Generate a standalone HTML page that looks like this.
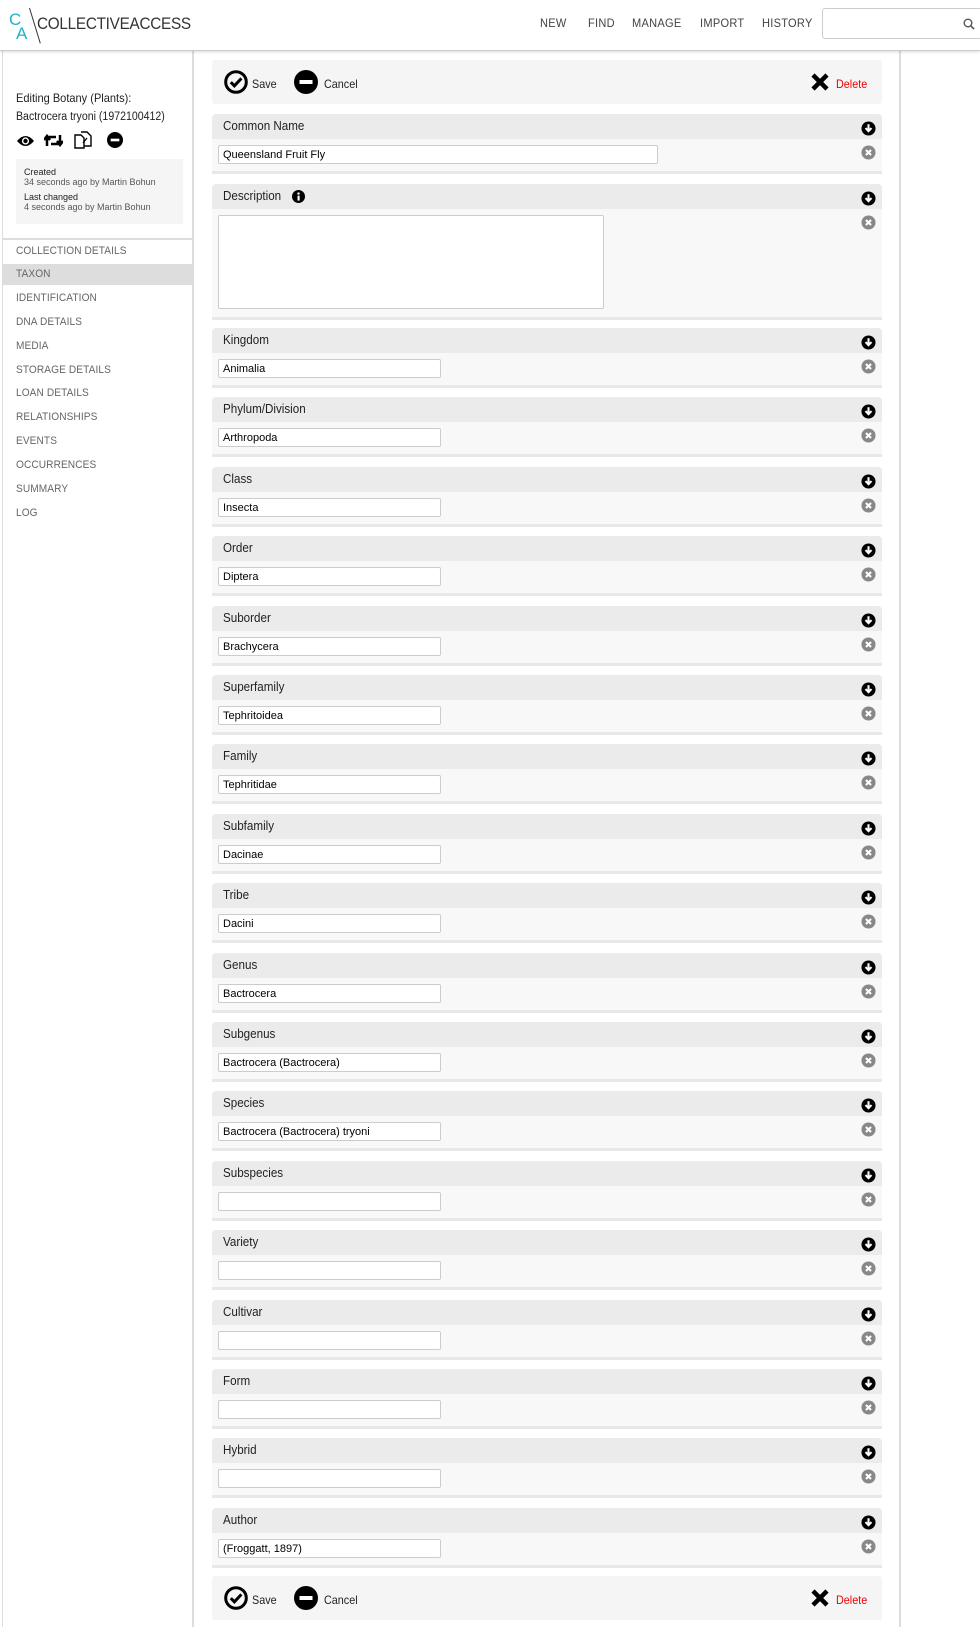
<!DOCTYPE html>
<html><head><meta charset="utf-8"><style>
*{box-sizing:border-box;margin:0;padding:0}
body{width:980px;height:1627px;background:#fff;font-family:"Liberation Sans",sans-serif;position:relative;overflow:hidden;color:#222}
.hdr{position:absolute;left:0;top:0;width:980px;height:51px;background:#fff;border-bottom:1px solid #ccc;box-shadow:0 1px 3px rgba(0,0,0,.15);z-index:2}
.logo{position:absolute;left:9px;top:8px;height:36px}
.logo .c{position:absolute;left:0;top:2px;font-size:17px;color:#22b0c8}
.logo .a{position:absolute;left:7px;top:16px;font-size:17px;color:#22b0c8}
.logo .sl{position:absolute;left:20px;top:0;width:1px;height:37px;background:#333;transform:rotate(-17deg);transform-origin:top}
.logo .t{position:absolute;left:28px;top:6px;font-size:17px;color:#333;letter-spacing:-.3px;transform:scaleX(.9);transform-origin:left;white-space:nowrap}
.nav{position:absolute;top:16px;font-size:12px;color:#444;letter-spacing:.3px;transform:scaleX(.92);transform-origin:left}
.search{position:absolute;left:822px;top:8px;width:160px;height:31px;border:1px solid #ccc;border-radius:3px}
.side{position:absolute;left:2px;top:51px;width:192px;height:1576px;border-right:2px solid #ddd;border-left:1px solid #ddd}
.side .ed{position:absolute;left:13px;top:40px;font-size:12px;color:#222;transform:scaleX(.92);transform-origin:left}
.side .bt{position:absolute;left:13px;top:60px;font-size:11.5px;color:#222;transform:scaleX(.92);transform-origin:left}
.info{position:absolute;left:13px;top:108px;width:167px;height:65px;background:#f5f5f5;font-size:9px;color:#555;padding:8px 0 0 8px;line-height:10px}
.info b{font-weight:normal;color:#222}
.sep{position:absolute;left:0;top:187px;width:190px;height:2px;background:#ddd}
.item{position:absolute;left:0;width:190px;height:21px;font-size:11px;color:#666;padding-left:13px;line-height:21px;letter-spacing:.1px}
.item span{display:inline-block;transform:scaleX(.92);transform-origin:left}
.main{position:absolute;left:194px;top:51px;width:707px;height:1576px;border-right:2px solid #ddd}
.tb{position:absolute;left:212px;width:670px;height:44px;background:#f5f5f5;border-radius:3px;font-size:12px}
.tb span{position:absolute;top:17px;transform:scaleX(.9);transform-origin:left}
.bundle{position:absolute;left:212px;width:670px;background:#f8f8f8;border-bottom:3px solid #e8e8e8;border-radius:4px 4px 0 0}
.bh{height:25px;background:#ebebeb;font-size:12.5px;padding:5px 0 0 11px;color:#222;position:relative;border-radius:4px 4px 0 0}
.bh span{display:inline-block;transform:scaleX(.93);transform-origin:left}
.bb{height:32px;position:relative}
.inp{position:absolute;left:6px;top:6px;width:223px;height:19px;background:#fff;border:1px solid #ccc;border-radius:2px;font-size:11px;padding:3px 0 0 4px;color:#000}
.dn{position:absolute;right:6px;top:7px}
.rm{position:absolute;right:6px;top:6px}
</style></head><body>
<svg width="0" height="0" style="position:absolute"><defs>
<symbol id="down" viewBox="0 0 16 16"><circle cx="8" cy="8" r="7.5" fill="#000"/><path d="M8 3.5v7M4.8 7.5L8 10.8l3.2-3.3" stroke="#fff" stroke-width="2.2" fill="none"/></symbol>
<symbol id="rm" viewBox="0 0 16 16"><circle cx="8" cy="8" r="7.5" fill="#888"/><path d="M5.3 5.3l5.4 5.4M10.7 5.3l-5.4 5.4" stroke="#fff" stroke-width="2.2"/></symbol>
<symbol id="save" viewBox="0 0 24 24"><circle cx="12" cy="12" r="10.3" fill="none" stroke="#000" stroke-width="3"/><path d="M6.8 12.2l3.6 3.6 7-7.4" stroke="#000" stroke-width="3" fill="none"/></symbol>
<symbol id="cancel" viewBox="0 0 24 24"><circle cx="12" cy="12" r="12" fill="#000"/><rect x="5.5" y="10" width="13" height="4" fill="#fff"/></symbol>
<symbol id="x" viewBox="0 0 20 20"><path d="M3 3l14 14M17 3L3 17" stroke="#000" stroke-width="4.5"/></symbol>
</defs></svg>
<div class="hdr">
 <div class="logo"><span class="c">C</span><span class="a">A</span><div class="sl"></div><span class="t">COLLECTIVEACCESS</span></div>
 <span class="nav" style="left:540px">NEW</span>
 <span class="nav" style="left:588px">FIND</span>
 <span class="nav" style="left:632px">MANAGE</span>
 <span class="nav" style="left:700px">IMPORT</span>
 <span class="nav" style="left:762px">HISTORY</span>
 <div class="search"><svg style="position:absolute;right:6px;top:9px" width="12" height="12" viewBox="0 0 12 12"><circle cx="5" cy="5" r="3.8" fill="none" stroke="#555" stroke-width="1.4"/><path d="M7.8 7.8l3.3 3.3" stroke="#555" stroke-width="1.6"/></svg></div>
</div>
<div class="side">
 <div class="ed">Editing Botany (Plants):</div>
 <div class="bt">Bactrocera tryoni (1972100412)</div>
 <svg style="position:absolute;left:13px;top:83px" width="19" height="14" viewBox="0 0 19 14"><path d="M1 7Q9.5-3 18 7Q9.5 17 1 7Z" fill="#000"/><circle cx="9.5" cy="7" r="3.6" fill="#fff"/><circle cx="9.5" cy="7" r="2.2" fill="#000"/></svg>
 <svg style="position:absolute;left:41px;top:82px" width="19" height="15" viewBox="0 0 19 15"><path d="M3 13V4h9M0 7l3-4 3 4M16 2v9H7M13 8l3 4 3-4" stroke="#000" stroke-width="2.5" fill="none"/></svg>
 <svg style="position:absolute;left:71px;top:80px" width="19" height="18" viewBox="0 0 19 18"><path d="M1 4h6l3 3v10H1z M7 1h6l4 4v10h-7" fill="#fff" stroke="#000" stroke-width="1.4"/><path d="M9 12l4-5" stroke="#000" stroke-width="1.3"/></svg>
 <svg style="position:absolute;left:104px;top:81px" width="16" height="16"><use href="#cancel"/></svg>
 <div class="info"><b>Created</b><br>34 seconds ago by Martin Bohun<div style="height:5px"></div><b>Last changed</b><br>4 seconds ago by Martin Bohun</div>
 <div class="sep"></div>
 <div class="item" style="top:190px"><span>COLLECTION DETAILS</span></div>
 <div class="item" style="top:213px;background:#ddd"><span>TAXON</span></div>
 <div class="item" style="top:237px"><span>IDENTIFICATION</span></div>
 <div class="item" style="top:261px"><span>DNA DETAILS</span></div>
 <div class="item" style="top:285px"><span>MEDIA</span></div>
 <div class="item" style="top:309px"><span>STORAGE DETAILS</span></div>
 <div class="item" style="top:332px"><span>LOAN DETAILS</span></div>
 <div class="item" style="top:356px"><span>RELATIONSHIPS</span></div>
 <div class="item" style="top:380px"><span>EVENTS</span></div>
 <div class="item" style="top:404px"><span>OCCURRENCES</span></div>
 <div class="item" style="top:428px"><span>SUMMARY</span></div>
 <div class="item" style="top:452px"><span>LOG</span></div>
</div>
<div class="main"></div>

<div class="tb" style="top:60px">
 <svg style="position:absolute;left:12px;top:10px" width="24" height="24"><use href="#save"/></svg><span style="left:40px">Save</span>
 <svg style="position:absolute;left:82px;top:10px" width="24" height="24"><use href="#cancel"/></svg><span style="left:112px">Cancel</span>
 <svg style="position:absolute;left:598px;top:12px" width="20" height="20"><use href="#x"/></svg><span style="left:624px;color:#e00">Delete</span>
</div>

<div class="bundle" style="top:114px"><div class="bh"><span>Common Name</span><svg class="dn" width="15" height="15"><use href="#down"/></svg></div><div class="bb"><div class="inp" style="width:440px">Queensland Fruit Fly</div><svg class="rm" width="15" height="15"><use href="#rm"/></svg></div></div>

<div class="bundle" style="top:184px"><div class="bh"><span>Description</span> <svg style="position:absolute;left:80px;top:6px" width="13" height="13" viewBox="0 0 16 16"><circle cx="8" cy="8" r="8"/><rect x="6.8" y="7" width="2.6" height="6" fill="#fff"/><circle cx="8" cy="4.4" r="1.5" fill="#fff"/></svg><svg class="dn" width="15" height="15"><use href="#down"/></svg></div><div class="bb" style="height:108px"><div class="inp" style="width:386px;height:94px"></div><svg class="rm" width="15" height="15"><use href="#rm"/></svg></div></div>

<div class="bundle" style="top:328px"><div class="bh"><span>Kingdom</span><svg class="dn" width="15" height="15"><use href="#down"/></svg></div><div class="bb"><div class="inp">Animalia</div><svg class="rm" width="15" height="15"><use href="#rm"/></svg></div></div>
<div class="bundle" style="top:397.4px"><div class="bh"><span>Phylum/Division</span><svg class="dn" width="15" height="15"><use href="#down"/></svg></div><div class="bb"><div class="inp">Arthropoda</div><svg class="rm" width="15" height="15"><use href="#rm"/></svg></div></div>
<div class="bundle" style="top:466.8px"><div class="bh"><span>Class</span><svg class="dn" width="15" height="15"><use href="#down"/></svg></div><div class="bb"><div class="inp">Insecta</div><svg class="rm" width="15" height="15"><use href="#rm"/></svg></div></div>
<div class="bundle" style="top:536.2px"><div class="bh"><span>Order</span><svg class="dn" width="15" height="15"><use href="#down"/></svg></div><div class="bb"><div class="inp">Diptera</div><svg class="rm" width="15" height="15"><use href="#rm"/></svg></div></div>
<div class="bundle" style="top:605.6px"><div class="bh"><span>Suborder</span><svg class="dn" width="15" height="15"><use href="#down"/></svg></div><div class="bb"><div class="inp">Brachycera</div><svg class="rm" width="15" height="15"><use href="#rm"/></svg></div></div>
<div class="bundle" style="top:675px"><div class="bh"><span>Superfamily</span><svg class="dn" width="15" height="15"><use href="#down"/></svg></div><div class="bb"><div class="inp">Tephritoidea</div><svg class="rm" width="15" height="15"><use href="#rm"/></svg></div></div>
<div class="bundle" style="top:744.4px"><div class="bh"><span>Family</span><svg class="dn" width="15" height="15"><use href="#down"/></svg></div><div class="bb"><div class="inp">Tephritidae</div><svg class="rm" width="15" height="15"><use href="#rm"/></svg></div></div>
<div class="bundle" style="top:813.8px"><div class="bh"><span>Subfamily</span><svg class="dn" width="15" height="15"><use href="#down"/></svg></div><div class="bb"><div class="inp">Dacinae</div><svg class="rm" width="15" height="15"><use href="#rm"/></svg></div></div>
<div class="bundle" style="top:883.2px"><div class="bh"><span>Tribe</span><svg class="dn" width="15" height="15"><use href="#down"/></svg></div><div class="bb"><div class="inp">Dacini</div><svg class="rm" width="15" height="15"><use href="#rm"/></svg></div></div>
<div class="bundle" style="top:952.6px"><div class="bh"><span>Genus</span><svg class="dn" width="15" height="15"><use href="#down"/></svg></div><div class="bb"><div class="inp">Bactrocera</div><svg class="rm" width="15" height="15"><use href="#rm"/></svg></div></div>
<div class="bundle" style="top:1022px"><div class="bh"><span>Subgenus</span><svg class="dn" width="15" height="15"><use href="#down"/></svg></div><div class="bb"><div class="inp">Bactrocera (Bactrocera)</div><svg class="rm" width="15" height="15"><use href="#rm"/></svg></div></div>
<div class="bundle" style="top:1091.4px"><div class="bh"><span>Species</span><svg class="dn" width="15" height="15"><use href="#down"/></svg></div><div class="bb"><div class="inp">Bactrocera (Bactrocera) tryoni</div><svg class="rm" width="15" height="15"><use href="#rm"/></svg></div></div>
<div class="bundle" style="top:1160.8px"><div class="bh"><span>Subspecies</span><svg class="dn" width="15" height="15"><use href="#down"/></svg></div><div class="bb"><div class="inp"></div><svg class="rm" width="15" height="15"><use href="#rm"/></svg></div></div>
<div class="bundle" style="top:1230.2px"><div class="bh"><span>Variety</span><svg class="dn" width="15" height="15"><use href="#down"/></svg></div><div class="bb"><div class="inp"></div><svg class="rm" width="15" height="15"><use href="#rm"/></svg></div></div>
<div class="bundle" style="top:1299.6px"><div class="bh"><span>Cultivar</span><svg class="dn" width="15" height="15"><use href="#down"/></svg></div><div class="bb"><div class="inp"></div><svg class="rm" width="15" height="15"><use href="#rm"/></svg></div></div>
<div class="bundle" style="top:1369px"><div class="bh"><span>Form</span><svg class="dn" width="15" height="15"><use href="#down"/></svg></div><div class="bb"><div class="inp"></div><svg class="rm" width="15" height="15"><use href="#rm"/></svg></div></div>
<div class="bundle" style="top:1438.4px"><div class="bh"><span>Hybrid</span><svg class="dn" width="15" height="15"><use href="#down"/></svg></div><div class="bb"><div class="inp"></div><svg class="rm" width="15" height="15"><use href="#rm"/></svg></div></div>
<div class="bundle" style="top:1507.8px"><div class="bh"><span>Author</span><svg class="dn" width="15" height="15"><use href="#down"/></svg></div><div class="bb"><div class="inp">(Froggatt, 1897)</div><svg class="rm" width="15" height="15"><use href="#rm"/></svg></div></div>

<div class="tb" style="top:1576px">
 <svg style="position:absolute;left:12px;top:10px" width="24" height="24"><use href="#save"/></svg><span style="left:40px">Save</span>
 <svg style="position:absolute;left:82px;top:10px" width="24" height="24"><use href="#cancel"/></svg><span style="left:112px">Cancel</span>
 <svg style="position:absolute;left:598px;top:12px" width="20" height="20"><use href="#x"/></svg><span style="left:624px;color:#e00">Delete</span>
</div>
</body></html>
